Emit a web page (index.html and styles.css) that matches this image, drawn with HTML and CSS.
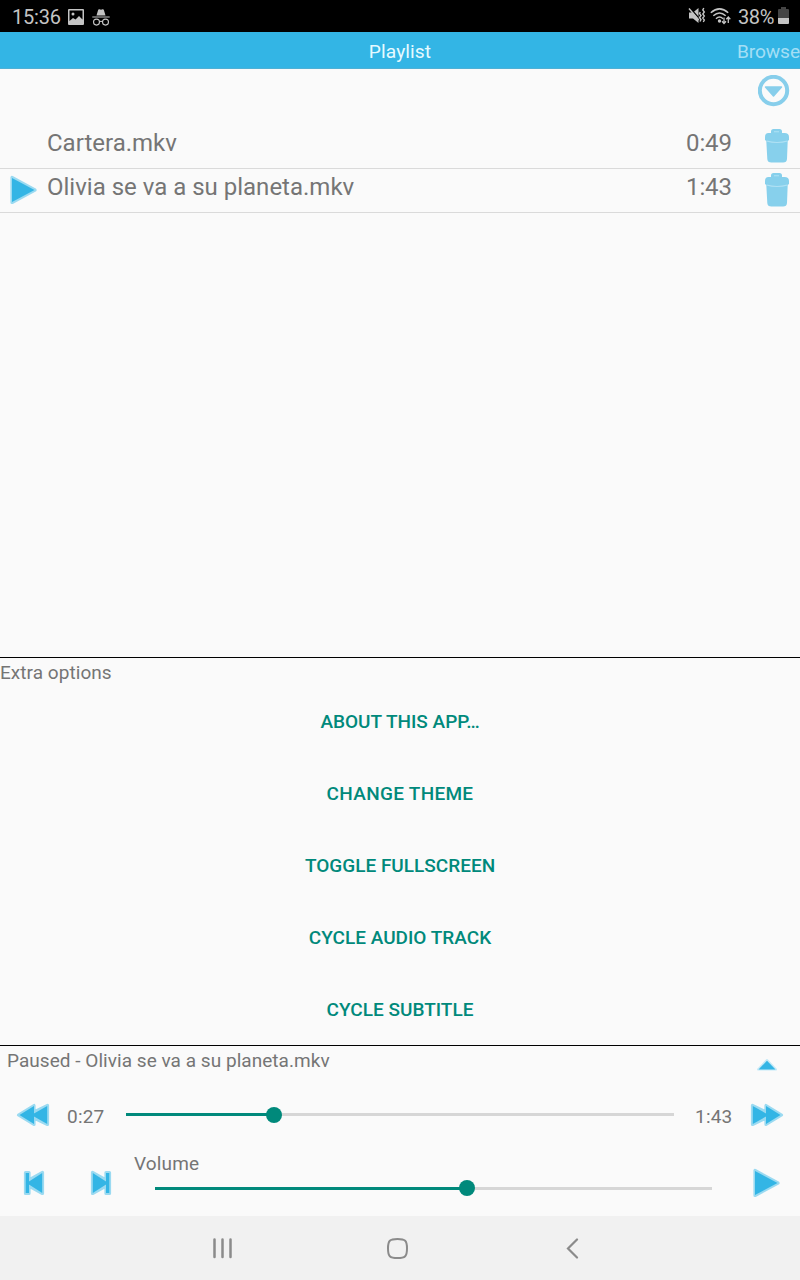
FILE: index.html
```html
<!DOCTYPE html>
<html lang="en">
<head>
<meta charset="utf-8">
<title>Playlist</title>
<link rel="stylesheet" href="styles.css">
</head>
<body>
<div class="screen">
  <header class="status">
    <span class="clock">15:36</span>
    <svg class="status-photo" width="16" height="16" viewBox="0 0 16 16"><path fill="#c4c4c4" fill-rule="evenodd" d="M1 0h14q1 0 1 1v14q0 1-1 1H1q-1 0-1-1V1q0-1 1-1zM1.500 1.500v10.500l3.500-3 2.500 1.500 3.500-3.500 3.500 3.500v-9z"/><circle cx="5" cy="5" r="1.500" fill="#c4c4c4"/></svg>
    <svg class="status-incognito" width="18" height="17" viewBox="0 0 18 17"><path fill="#c4c4c4" d="M4.500 6.500 6.200.8q.4-.8 1.300-.5l1.500.4 1.500-.4q.9-.3 1.300.5l1.700 5.700zM.3 7.400h17.400v1H.3z"/><g fill="none" stroke="#c4c4c4" stroke-width="1.100"><circle cx="4.500" cy="13.100" r="3"/><circle cx="13.500" cy="13.100" r="3"/><path d="M7.500 12.700q1.500-1 3 0"/></g></svg>
    <span class="spacer"></span>
    <svg class="status-mute" width="18" height="17" viewBox="0 0 18 17"><path fill="#c4c4c4" d="M1 5.500h4L10.500 1v15L5 11.500H1z"/><path d="M2.500 1.500 12 12.500" stroke="#000" stroke-width="1.500"/><path d="M1 1.500 10.800 13" stroke="#c4c4c4" stroke-width="1.400"/><path d="m12.300 5-.8 1.500 1.500 2-1.500 2 1.500 2-1 2M15.800 1l-1 2 1.500 2-1.500 2 1.500 2-1.500 2 1.500 2-1 2" fill="none" stroke="#c4c4c4" stroke-width="1.400"/></svg>
    <svg class="status-wifi" width="21" height="18" viewBox="0 0 21 18"><g fill="none" stroke="#c4c4c4" stroke-width="1.500"><path d="M.8 5.800q8.700-7.800 17.400 0M3.300 8.800q6.200-5.600 12.400 0M6 11.700q3.500-3.300 7 0"/><path stroke-width="1.300" d="M14 10.500v6m-2-2.200 2 2.200 2-2.200M18.300 16v-6m-2 2.200 2-2.200 2 2.200"/></g><circle cx="9.500" cy="14" r="1.700" fill="#c4c4c4"/></svg>
    <span class="battery-text">38%</span>
    <svg class="status-battery" width="11" height="17" viewBox="0 0 11 17"><path fill="#454545" d="M3 0h5v2h2q1 0 1 1v8H0V3q0-1 1-1h2z"/><path fill="#c4c4c4" d="M0 11h11v5q0 1-1 1H1q-1 0-1-1z"/></svg>
  </header>
  <nav class="tabs"><span></span><span class="tab-current">Playlist</span><span class="tab-next">Browse</span></nav>
  <main class="playlist">
    <div class="toolbar"><svg width="32" height="32" viewBox="0 0 32 32"><circle cx="15.500" cy="15.500" r="13.700" fill="none" stroke="#87ceeb" stroke-width="4"/><path d="M7.500 12h16l-8 9z" fill="#87ceeb" stroke="#87ceeb" stroke-width="1.500" stroke-linejoin="round"/></svg></div>
    <div class="track">
      <span class="marker"></span><span class="track-name">Cartera.mkv</span><span class="track-time">0:49</span>
      <svg class="trash" width="26" height="36" viewBox="0 0 26 36"><use href="#trash"/></svg>
    </div>
    <div class="track">
      <span class="marker"><svg width="28" height="30" viewBox="0 0 28 30"><use href="#play"/></svg></span><span class="track-name">Olivia se va a su planeta.mkv</span><span class="track-time">1:43</span>
      <svg class="trash" width="26" height="36" viewBox="0 0 26 36"><use href="#trash"/></svg>
    </div>
  </main>
  <section class="options">
    <h2>Extra options</h2>
    <button>ABOUT THIS APP…</button>
    <button class="wide">CHANGE THEME</button>
    <button>TOGGLE FULLSCREEN</button>
    <button>CYCLE AUDIO TRACK</button>
    <button>CYCLE SUBTITLE</button>
  </section>
  <section class="player">
    <div class="now"><span class="now-text">Paused - Olivia se va a su planeta.mkv</span>
      <svg width="22" height="15" viewBox="0 0 22 15"><path d="M2 12.500 11 3l9 9.500z" fill="#33b5e5" stroke="#c4e9f7" stroke-width="2" stroke-linejoin="round"/><path d="M2.500 12.500h17L11 3.800z" fill="#33b5e5"/></svg></div>
    <div class="seek">
      <svg width="34" height="24" viewBox="0 0 34 24"><g transform="translate(34 0) scale(-1 1)"><use href="#forward"/></g></svg>
      <span class="elapsed">0:27</span>
      <div class="slider slider-seek"><div class="fill" style="width:148px"></div><div class="thumb"></div></div>
      <span class="duration">1:43</span>
      <svg width="34" height="24" viewBox="0 0 34 24"><use href="#forward"/></svg>
    </div>
    <div class="controls">
      <svg class="previous" width="22" height="26" viewBox="0 0 22 26"><g transform="translate(22 0) scale(-1 1)"><use href="#next"/></g></svg>
      <svg class="next" width="22" height="26" viewBox="0 0 22 26"><use href="#next"/></svg>
      <div class="volume"><span class="volume-label">Volume</span><div class="slider slider-volume"><div class="fill" style="width:312px"></div><div class="thumb"></div></div></div>
      <svg class="play" width="28" height="30" viewBox="0 0 28 30"><use href="#play"/></svg>
    </div>
  </section>
  <footer class="system-nav">
    <svg width="20" height="22" viewBox="0 0 20 22"><path d="M2.500 2.500v17.500M10.500 2.500v17.500M18.500 2.500v17.500" stroke="#8b8b8b" stroke-width="2.500" stroke-linecap="round"/></svg>
    <svg width="22" height="22" viewBox="0 0 22 22"><path d="M11.500 2c7.800 0 9.500 1.700 9.500 9.500S19.300 21 11.500 21 2 19.300 2 11.500 3.700 2 11.500 2z" fill="none" stroke="#8b8b8b" stroke-width="2"/></svg>
    <svg width="14" height="22" viewBox="0 0 14 22"><path d="m12 2.500-9 9 9 9" fill="none" stroke="#8b8b8b" stroke-width="2.200" stroke-linecap="round"/></svg>
  </footer>
</div>
<svg class="symbols" width="0" height="0">
  <defs>
    <g id="play" stroke-linejoin="round"><path d="M3 2.500v25L26 15z" fill="#87d3ef" stroke="#9bdaf1" stroke-width="3.200"/><path d="M3 3v24L25.500 15z" fill="#33b5e5"/></g>
    <g id="forward" stroke-linejoin="round"><path d="M2.500 2.500v19L16 15v6.500L31.500 12 16 2.500V9z" fill="#87d3ef" stroke="#9bdaf1" stroke-width="3.200"/><path d="M2.800 3v18L16 13.500v7.500L30.500 12 16 3v7.500z" fill="#33b5e5"/></g>
    <g id="next" stroke-linejoin="round"><path d="M2.500 2.500v21L16 16v7.500h3.500v-21H16V10z" fill="#87d3ef" stroke="#9bdaf1" stroke-width="3.200"/><path d="M2.800 3v20L16 14.500V23h3.300V3H16v8.500z" fill="#33b5e5"/></g>
    <g id="trash"><path d="M7 5V3.500Q7 1 9.500 1h6Q18 1 18 3.500V5h2.500Q25 5 25 9v3l-1.300 1-.7 18q-.2 3.500-4 3.500H7.500Q3.500 34.500 3.300 31L2.300 13 1 12V9Q1 5 4.500 5z" fill="#87d0ec"/><path d="M2.500 13q10.500 3 21 0M10 3.800h5" fill="none" stroke="#b0e1f4" stroke-width="1.100"/></g>
  </defs>
</svg>
</body>
</html>
```
FILE: styles.css
```css
* { box-sizing: border-box; }
body { margin: 0; background: #fafafa; font-family: Roboto, sans-serif; color: #757575; }
svg { display: block; flex: none; }
.symbols { position: absolute; }
.screen { width: 800px; height: 1280px; display: flex; flex-direction: column; overflow: hidden; }

.status { height: 32px; flex: none; background: #000; color: #c4c4c4; display: flex; align-items: center; padding: 2px 11px 0 12px; font-size: 20px; line-height: 30px; white-space: nowrap; }
.clock { width: 56px; letter-spacing: -0.2px; }
.status-incognito { margin-left: 8px; margin-right: 1px; }
.status-photo { margin-top: -1px; }
.spacer { flex: 1; }
.status-mute, .status-wifi { margin-top: -3px; }
.status-wifi { margin-left: 4px; }
.battery-text { margin-left: 7px; width: 40px; letter-spacing: -0.4px; }
.status-battery { margin-top: -4px; }

.tabs { height: 37px; flex: none; background: #33b5e5; border-bottom: 1px solid #4fb0d5; display: grid; grid-template-columns: 1fr auto 1fr; font-size: 19.2px; line-height: 39px; }
.tab-current { color: #e6faff; letter-spacing: 0.1px; }
.tab-next { color: #a3dff5; text-align: right; letter-spacing: -0.1px; }

.playlist { height: 588px; flex: none; }
.toolbar { height: 56px; padding: 6px 10px 0; display: flex; justify-content: flex-end; }
.track { height: 44px; border-bottom: 1px solid #dadada; display: flex; font-size: 24px; line-height: 37px; white-space: nowrap; }
.marker { width: 47px; padding: 6px 0 0 9px; }
.track-name { flex: 1; }
.track-time { width: 78px; letter-spacing: -0.1px; }
.trash { margin: 3px 10px 0 0; }

.options { height: 388px; flex: none; border-top: 1px solid #000; display: flex; flex-direction: column; }
.options h2 { margin: 0; height: 28px; font-size: 19px; font-weight: 400; line-height: 30px; letter-spacing: 0.05px; }
.options button { height: 72px; border: 0; padding: 0; background: none; color: #00897b; font: 500 19px/72px Roboto, sans-serif; text-align: center; }
.options .wide { letter-spacing: 0.3px; }

.player { height: 171px; flex: none; border-top: 1px solid #000; font-size: 19px; line-height: 30px; letter-spacing: 0.04px; }
.now { height: 46px; display: flex; justify-content: space-between; padding: 0 22px 0 7px; }
.now svg { margin-top: 11px; }
.seek { height: 46px; display: flex; align-items: center; padding: 0 16px; }
.elapsed { width: 76px; padding: 3px 0 0 17px; letter-spacing: 0.2px; }
.duration { width: 76px; padding: 3px 0 0 21px; letter-spacing: 0.2px; }
.slider { height: 16px; display: flex; align-items: center; background: linear-gradient(#d6d6d6, #d6d6d6) center / 100% 3px no-repeat; }
.slider-seek { width: 548px; margin-top: -1px; }
.slider-volume { width: 557px; margin: 0 0 0 21px; }
.fill { height: 3px; background: #00897b; }
.thumb { width: 16px; height: 16px; margin-left: -8px; border-radius: 50%; background: #00897b; }
.controls { height: 78px; display: flex; padding: 10px 20px 0 23px; }
.controls .previous, .controls .next { margin-top: 22px; }
.controls .next { margin-left: 45px; }
.controls .play { margin: 20px 0 0 auto; }
.volume { width: 578px; margin-left: 22px; }
.volume-label { display: block; height: 32px; line-height: 31px; letter-spacing: 0.15px; }

.system-nav { height: 64px; flex: none; background: #f1f1f1; display: flex; align-items: center; padding-left: 212px; gap: 154px; }
.system-nav svg:last-child { margin-left: 3px; }
```
